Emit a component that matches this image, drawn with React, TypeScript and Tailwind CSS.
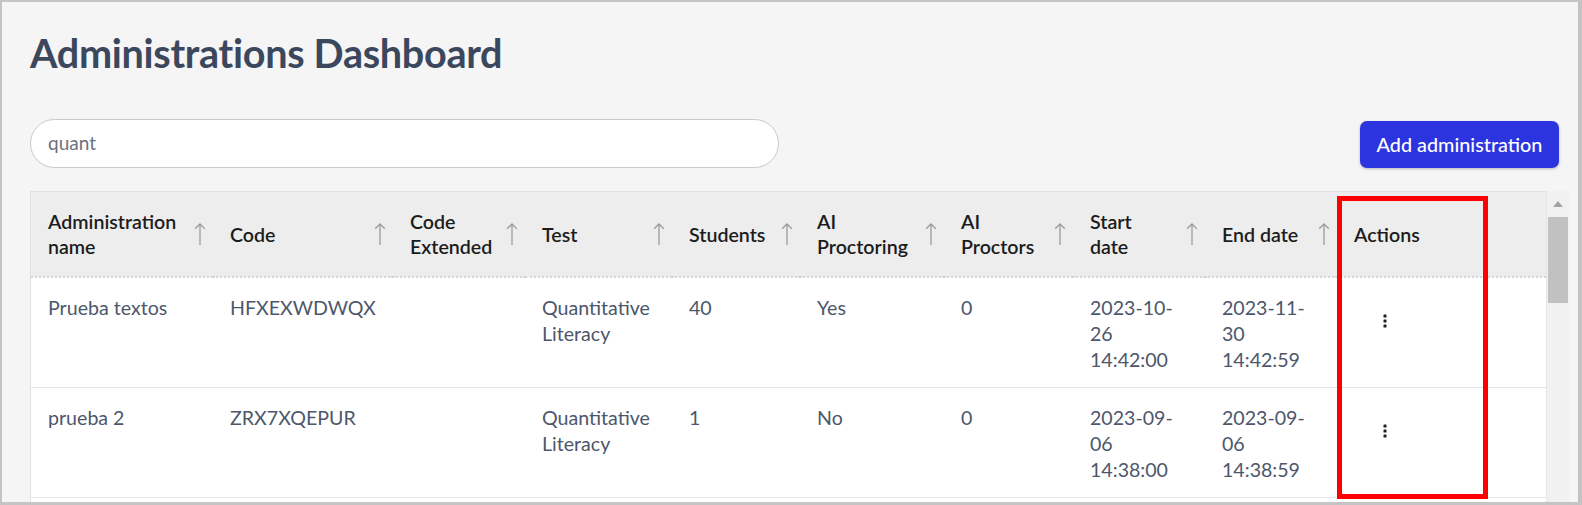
import React from 'react';

const COLUMNS = [
  { label: 'Administration\nname', width: 182 },
  { label: 'Code', width: 180 },
  { label: 'Code\nExtended', width: 132 },
  { label: 'Test', width: 147 },
  { label: 'Students', width: 128 },
  { label: 'AI\nProctoring', width: 144 },
  { label: 'AI\nProctors', width: 129 },
  { label: 'Start\ndate', width: 132 },
  { label: 'End date', width: 132 },
  { label: 'Actions', width: 209, noSort: true },
];

const ROWS = [
  ['Prueba textos', 'HFXEXWDWQX', '', 'Quantitative\nLiteracy', '40', 'Yes', '0', '2023-10-\n26\n14:42:00', '2023-11-\n30\n14:42:59'],
  ['prueba 2', 'ZRX7XQEPUR', '', 'Quantitative\nLiteracy', '1', 'No', '0', '2023-09-\n06\n14:38:00', '2023-09-\n06\n14:38:59'],
];

function SortArrow() {
  return (
    <svg width="12" height="24" viewBox="0 0 12 24" fill="none" className="shrink-0">
      <path d="M6 23V2M1.2 6.8L6 2l4.8 4.8" stroke="#9b9b9b" strokeWidth="1.3" />
    </svg>
  );
}

function DotsIcon() {
  return (
    <svg width="4" height="14" viewBox="0 0 4 14" fill="#1f1f1f">
      <rect x="0.5" y="0.5" width="3" height="3" rx="0.6" />
      <rect x="0.5" y="5.5" width="3" height="3" rx="0.6" />
      <rect x="0.5" y="10.5" width="3" height="3" rx="0.6" />
    </svg>
  );
}

export default function App() {
  return (
    <div
      className="relative h-[505px] w-[1582px] overflow-hidden border-t-2 border-l-2 border-r-[4px] border-b-[3px] border-[#c4c4c4] bg-[#f5f5f5]"
      style={{ fontFamily: 'Lato, "Noto Sans", sans-serif' }}
    >
      <div className="pl-[28px] pr-[9px] pt-[27px]">
        {/* ─── Title ─── */}
        <h1 className="text-[39.6px] font-bold leading-[48px] tracking-[-0.3px] text-[#3b475c]">
          Administrations Dashboard
        </h1>

        {/* ─── Search + button ─── */}
        <div className="mt-[42px] flex items-end justify-between">
          <div className="flex h-[49px] w-[749px] items-center rounded-full border border-[#c9c9c9] bg-white pl-[17px] text-[19px] text-[#6b7280]">
            quant
          </div>
          <button className="mr-[10px] h-[47px] w-[199px] rounded-[7px] bg-[#2c34e0] text-[19.8px] font-medium text-white shadow-[0_1px_3px_rgba(0,0,0,0.25)]">
            Add administration
          </button>
        </div>

        {/* ─── Table ─── */}
        <div className="mt-[23px] flex h-[320px]">
          <div className="flex-1 border-l border-t border-[#e1e1e1] bg-white">
            <table className="w-full table-fixed border-collapse">
              <colgroup>
                {COLUMNS.map((c, i) => (
                  <col key={i} style={{ width: c.width }} />
                ))}
              </colgroup>
              <thead>
                <tr className="h-[85px] border-b-2 border-dotted border-[#d3d6dd] bg-[#ededed]">
                  {COLUMNS.map((c, i) => (
                    <th key={i} className="p-0 text-left align-middle font-semibold">
                      <div className="flex items-center justify-between gap-1 pl-[17px] pr-[7px]">
                        <span className="whitespace-pre-line text-[19.6px] leading-[25px] text-[#1c1c1c]">
                          {c.label}
                        </span>
                        {!c.noSort && <SortArrow />}
                      </div>
                    </th>
                  ))}
                </tr>
              </thead>
              <tbody>
                {ROWS.map((row, r) => (
                  <tr key={r} className="h-[110px] border-b border-[#e3e5eb]">
                    {row.map((cell, i) => (
                      <td
                        key={i}
                        className="whitespace-pre-line pl-[17px] pr-2 pt-[17px] align-top text-[19.6px] leading-[26px] text-[#4d576b]"
                      >
                        {cell}
                      </td>
                    ))}
                    <td className="pl-[21px] pt-[17px] align-top">
                      <div className="flex h-[52px] w-[54px] items-center justify-center">
                        <DotsIcon />
                      </div>
                    </td>
                  </tr>
                ))}
              </tbody>
            </table>
          </div>

          {/* ─── Scrollbar ─── */}
          <div className="flex w-[24px] flex-col items-center border-l border-[#e6e6e6] bg-[#f1f1f1] pt-[10px]">
            <svg width="10" height="6" viewBox="0 0 10 6" fill="#a3a3a3">
              <path d="M0 6L5 0l5 6z" />
            </svg>
            <div className="mt-[10px] h-[86px] w-[20px] bg-[#c1c1c1]" />
          </div>
        </div>
      </div>

      {/* highlight overlay */}
      <div className="absolute left-[1335px] top-[194px] h-[303px] w-[151px] border-[5px] border-[#ff0000]" />
    </div>
  );
}
